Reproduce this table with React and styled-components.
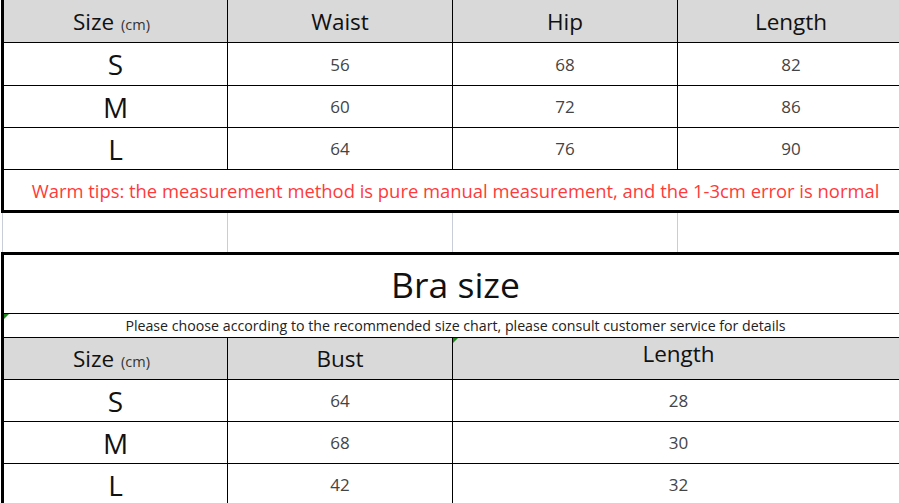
import React from "react";
import styled, { createGlobalStyle } from "styled-components";

const GlobalStyle = createGlobalStyle`
  html, body {
    margin: 0;
    padding: 0;
    background: #ffffff;
    overflow: hidden;
  }
  body {
    font-family: "Open Sans", "Noto Sans", sans-serif;
  }
`;

const FOUR = "224px 225px 225px 226px";
const THREE = "224px 225px 451px";

const waistRows = [
  ["S", "56", "68", "82"],
  ["M", "60", "72", "86"],
  ["L", "64", "76", "90"],
];

const braRows = [
  ["S", "64", "28"],
  ["M", "68", "30"],
  ["L", "42", "32"],
];

const App = () => {
  return (
    <>
      <GlobalStyle />
      <Sheet>
        <Row $cols={FOUR} $h={43} $header>
          <Cell>
            <SizeLabel>
              Size <small>(cm)</small>
            </SizeLabel>
          </Cell>
          <Cell>
            <HeadText>Waist</HeadText>
          </Cell>
          <Cell>
            <HeadText>Hip</HeadText>
          </Cell>
          <Cell $last>
            <HeadText>Length</HeadText>
          </Cell>
        </Row>
        {waistRows.map((r, i) => (
          <Row key={r[0]} $cols={FOUR} $h={i === 0 ? 43 : 42}>
            <Cell>
              <SizeLetter>{r[0]}</SizeLetter>
            </Cell>
            <Cell>
              <Value>{r[1]}</Value>
            </Cell>
            <Cell>
              <Value>{r[2]}</Value>
            </Cell>
            <Cell $last>
              <Value>{r[3]}</Value>
            </Cell>
          </Row>
        ))}
        <Row $cols="903px" $h={43} $thickBottom>
          <Cell $last>
            <Tip>
              Warm tips: the measurement method is pure manual measurement, and
              the 1-3cm error is normal
            </Tip>
          </Cell>
        </Row>
        <GapRow>
          <GapCell />
          <GapCell />
          <GapCell />
          <GapCell />
        </GapRow>
        <Row $cols="903px" $h={62} $thickTop>
          <Cell $last>
            <Title>Bra size</Title>
          </Cell>
        </Row>
        <Row $cols="903px" $h={24}>
          <Cell $last $flag>
            <Note>
              Please choose according to the recommended size chart, please
              consult customer service for details
            </Note>
          </Cell>
        </Row>
        <Row $cols={THREE} $h={42} $header>
          <Cell>
            <SizeLabel>
              Size <small>(cm)</small>
            </SizeLabel>
          </Cell>
          <Cell>
            <HeadText>Bust</HeadText>
          </Cell>
          <Cell $last $flag $top>
            <HeadText>Length</HeadText>
          </Cell>
        </Row>
        {braRows.map((r) => (
          <Row key={r[0]} $cols={THREE} $h={42}>
            <Cell>
              <SizeLetter>{r[0]}</SizeLetter>
            </Cell>
            <Cell>
              <Value>{r[1]}</Value>
            </Cell>
            <Cell $last>
              <Value>{r[2]}</Value>
            </Cell>
          </Row>
        ))}
      </Sheet>
    </>
  );
};

const Sheet = styled.div`
  width: 904px;
  padding-left: 1px;
  display: flex;
  flex-direction: column;
`;

const Row = styled.div`
  display: grid;
  grid-template-columns: ${(p) => p.$cols};
  height: ${(p) => p.$h}px;
  box-sizing: border-box;
  border-left: 3px solid #000;
  border-top: ${(p) => (p.$thickTop ? "3px solid #000" : "none")};
  border-bottom: ${(p) => (p.$thickBottom ? "3px" : "1px")} solid #000;
  background: ${(p) => (p.$header ? "#d9d9d9" : "#ffffff")};
`;

const Cell = styled.div`
  position: relative;
  display: flex;
  justify-content: center;
  align-items: ${(p) => (p.$top ? "flex-start" : "center")};
  padding-top: ${(p) => (p.$top ? "0" : "0")};
  border-right: ${(p) => (p.$last ? "none" : "1px solid #000")};
  overflow: hidden;
  white-space: nowrap;

  &::before {
    content: "";
    display: ${(p) => (p.$flag ? "block" : "none")};
    position: absolute;
    left: 0;
    top: 0;
    width: 0;
    height: 0;
    border-top: 5px solid #1e8a1e;
    border-right: 5px solid transparent;
  }
`;

const GapRow = styled.div`
  display: grid;
  grid-template-columns: 225px 225px 225px 226px;
  height: 39px;
  margin-left: 1px;
  border-left: 1px solid #c8cdd8;
`;

const GapCell = styled.div`
  border-right: 1px solid #c8cdd8;

  &:last-child {
    border-right: none;
  }
`;

const SizeLabel = styled.span`
  font-size: 22.5px;
  color: #111;
  margin-right: 8px;

  small {
    font-size: 14.5px;
    color: #333;
    margin-left: 1px;
  }
`;

const HeadText = styled.span`
  font-size: 22.5px;
  color: #111;
`;

const SizeLetter = styled.span`
  font-size: 28px;
  color: #111;
`;

const Value = styled.span`
  font-size: 17px;
  color: #444;
`;

const Tip = styled.span`
  font-size: 18.4px;
  color: #ff3a3a;
`;

const Title = styled.span`
  font-size: 35.5px;
  color: #111;
`;

const Note = styled.span`
  font-size: 14.2px;
  color: #222;
`;

export default App;
